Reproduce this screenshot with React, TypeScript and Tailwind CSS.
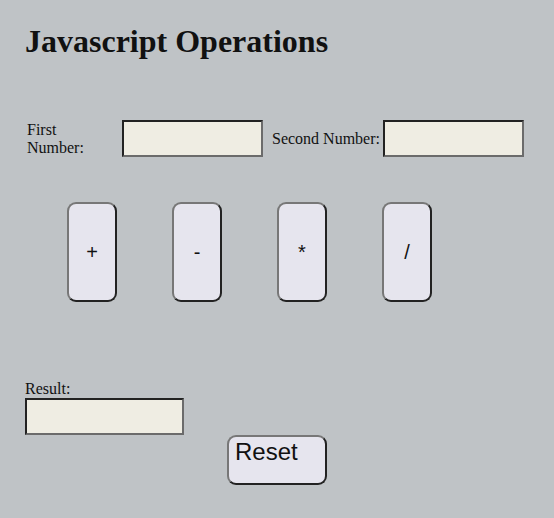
import React from 'react'

const inputCls =
  'h-[37px] bg-[#efede3] border-2 border-t-[#222] border-l-[#222] border-b-[#6b6b6b] border-r-[#6b6b6b] outline-none px-1'

const btnCls =
  'bg-[#e6e5ee] border-2 border-t-[#777] border-l-[#777] border-b-[#222] border-r-[#222] rounded-[9px] text-[#111]'

const ops = ['+', '-', '*', '/']

export default function App() {
  return (
    <div className="min-h-[518px] bg-[#bfc3c6] pl-[25px] pt-[23px] font-['Liberation_Serif',serif] text-[16px] text-[#111]">
      <h1 className="text-[32px] font-bold leading-[37px] text-[#111]">Javascript Operations</h1>

      {/* Inputs */}
      <div className="mt-[60px] flex items-center">
        <label className="w-[70px] ml-[2px] mr-[25px] leading-[18px]">First Number:</label>
        <input className={`${inputCls} w-[141px]`} />
        <label className="ml-[9px] mr-[3px] leading-[18px]">Second Number:</label>
        <input className={`${inputCls} w-[141px]`} />
      </div>

      {/* Operators */}
      <div className="mt-[45px] ml-[42px] flex gap-[55px]">
        {ops.map((op) => (
          <button
            key={op}
            className={`${btnCls} w-[50px] h-[100px] flex items-center justify-center font-['Liberation_Sans',sans-serif] text-[20px]`}
          >
            {op}
          </button>
        ))}
      </div>

      {/* Result */}
      <div className="mt-[78px] flex flex-col">
        <label className="leading-[18px]">Result:</label>
        <input className={`${inputCls} w-[159px]`} />
      </div>

      <button
        className={`${btnCls} ml-[202px] w-[100px] h-[50px] flex items-start justify-start pl-[6px] pt-[2px] font-['Liberation_Sans',sans-serif] text-[24px] leading-[26px]`}
      >
        Reset
      </button>
    </div>
  )
}
